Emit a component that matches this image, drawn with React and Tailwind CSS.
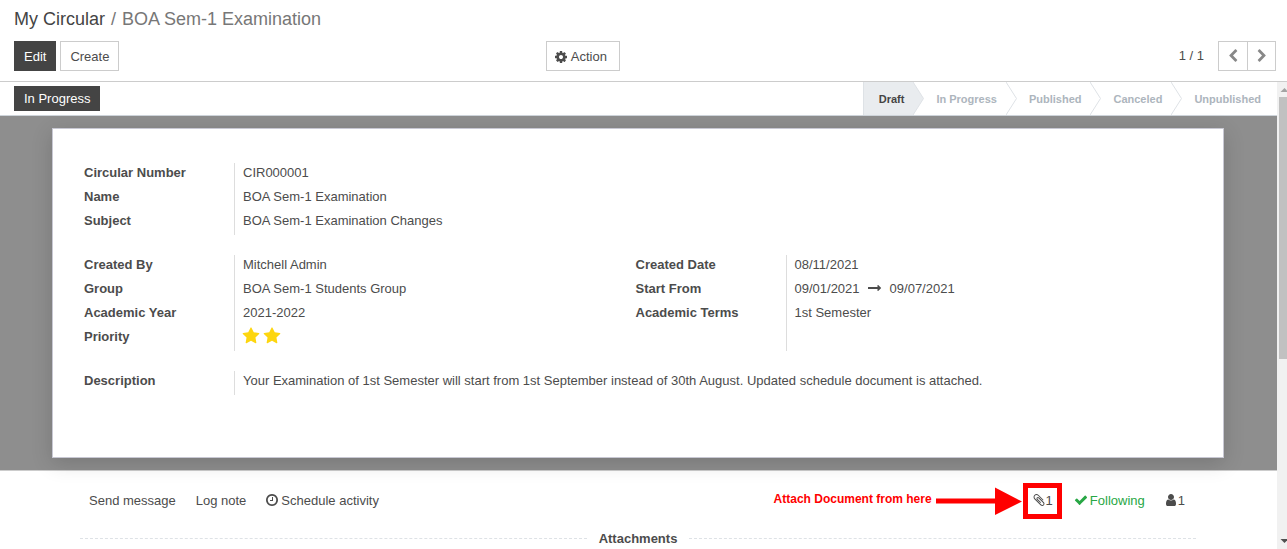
import React from "react";

const ICONS = {
  cog: "M1152 896q0-106-75-181t-181-75-181 75-75 181 75 181 181 75 181-75 75-181zm512-109v222q0 12-8 23t-20 13l-185 28q-19 54-39 91 35 50 107 138 10 12 10 25t-9 23q-27 37-99 108t-94 71q-12 0-26-9l-138-108q-44 23-91 38-16 136-29 186-7 28-36 28h-222q-14 0-24.5-8.5t-11.5-21.5l-28-184q-49-16-90-37l-141 107q-10 9-25 9-14 0-25-11-126-114-165-168-7-10-7-23 0-12 8-23 15-21 51-66.5t54-70.5q-27-50-41-99l-183-27q-13-2-21-12.5t-8-23.5v-222q0-12 8-23t19-13l186-28q14-46 39-92-40-57-107-138-10-12-10-24 0-10 9-23 26-36 98.5-107.5t94.5-71.5q13 0 26 10l138 107q44-23 91-38 16-136 29-186 7-28 36-28h222q14 0 24.5 8.5t11.5 21.5l28 184q49 16 90 37l142-107q9-9 24-9 13 0 25 10 129 119 165 170 7 8 7 22 0 12-8 23-15 21-51 66.5t-54 70.5q26 50 41 98l183 28q13 2 21 12.5t8 23.5z",
  star: "M1728 647q0 22-26 48l-363 354 86 500q1 7 1 20 0 21-10.5 35.5t-30.5 14.5q-19 0-40-12l-449-236-449 236q-22 12-40 12-21 0-31.5-14.5t-10.5-35.5q0-6 2-20l86-500-364-354q-25-27-25-48 0-37 56-46l502-73 225-455q19-41 49-41t49 41l225 455 502 73q56 9 56 46z",
  check: "M1671 566q0 40-28 68l-724 724-136 136q-28 28-68 28t-68-28l-136-136-362-362q-28-28-28-68t28-68l136-136q28-28 68-28t68 28l294 295 656-657q28-28 68-28t68 28l136 136q28 28 28 68z",
  user: "M1536 1399q0 109-62.5 187t-150.5 78h-854q-88 0-150.5-78t-62.5-187q0-85 8.5-160.5t31.5-152 58.5-131 94-89 134.5-34.5q131 128 313 128t313-128q76 0 134.5 34.5t94 89 58.5 131 31.5 152 8.5 160.5zm-256-887q0 159-112.5 271.5t-271.5 112.5-271.5-112.5-112.5-271.5 112.5-271.5 271.5-112.5 271.5 112.5 112.5 271.5z",
  clock: "M1024 544v448q0 14-9 23t-23 9h-320q-14 0-23-9t-9-23v-64q0-14 9-23t23-9h224v-352q0-14 9-23t23-9h64q14 0 23 9t9 23zm416 352q0-148-73-273t-198-198-273-73-273 73-198 198-73 273 73 273 198 198 273 73 273-73 198-198 73-273zm224 0q0 209-103 385.5t-279.5 279.5-385.5 103-385.5-103-279.5-279.5-103-385.5 103-385.5 279.5-279.5 385.5-103 385.5 103 279.5 279.5 103 385.5z",
  left: "M1427 301l-531 531 531 531q19 19 19 45t-19 45l-166 166q-19 19-45 19t-45-19l-742-742q-19-19-19-45t19-45l742-742q19-19 45-19t45 19l166 166q19 19 19 45t-19 45z",
  right: "M1363 877l-742 742q-19 19-45 19t-45-19l-166-166q-19-19-19-45t19-45l531-531-531-531q-19-19-19-45t19-45l166-166q19-19 45-19t45 19l742 742q19 19 19 45t-19 45z",
  clip: "M1596 1385q0 117-79 196t-196 79q-135 0-235-100l-777-776q-113-115-113-271 0-159 110-270t269-111q158 0 273 113l605 606q10 10 10 22 0 16-30.5 46.5t-46.5 30.5q-13 0-23-10l-606-607q-79-77-181-77-106 0-179 75t-73 181q0 105 76 181l776 777q63 63 145 63 64 0 106-42t42-106q0-82-63-145l-581-581q-26-24-60-24-29 0-48 19t-19 48q0 32 25 59l410 410q10 10 10 22 0 16-31 47t-47 31q-12 0-22-10l-410-410q-63-61-63-149 0-82 57-139t139-57q88 0 149 63l581 581q100 98 100 235z",
};

function Icon({ name, className = "mb-0.5 size-[14px]" }) {
  return (
    <svg viewBox="0 0 1792 1792" fill="currentColor" aria-hidden="true" className={`shrink-0 ${className}`}>
      <path d={ICONS[name]} />
    </svg>
  );
}

function Group({ rows }) {
  return (
    <table className="w-full table-fixed border-separate border-spacing-0">
      <tbody>
        {rows.map(([label, value], i) => (
          <tr key={i} className="h-6 align-top">
            <th scope="row" className="w-[150px] p-0 text-left font-bold">{label}</th>
            <td className="border-l border-[#ddd] p-0 pl-2">{value}</td>
          </tr>
        ))}
      </tbody>
    </table>
  );
}

const dates = (
  <span className="flex items-center gap-2">
    09/01/2021
    <svg viewBox="0 0 14 8" className="mb-0.5 h-2 w-[14px]" fill="currentColor" aria-hidden="true">
      <path d="M0.300 3H9.500V1.200Q9.700 0.800 10.200 1.100L13 3.700Q13.200 4 13 4.300L10.200 6.900Q9.700 7.200 9.500 6.800V5H0.300Q0 5 0 4.700V3.300Q0 3 0.300 3Z" />
    </svg>
    09/07/2021
  </span>
);

const stars = (
  <span className="-ml-px flex gap-[3px]">
    <Icon name="star" className="size-[18px]" />
    <Icon name="star" className="size-[18px]" />
  </span>
);

function Stage({ label, current, last }) {
  return (
    <li className={`flex items-stretch ${current ? "border-l border-[#dee2e6]" : ""}`}>
      <span
        className={`flex items-center ${
          current ? "bg-[#e9ecef] pr-[9px] pl-[15px] text-[#444]" : last ? "pr-4 pl-3" : "pr-[9px] pl-3"
        }`}
      >
        {label}
      </span>
      {!last && (
        <svg viewBox="0 0 11 33" className="h-[33px] w-[11px]" aria-hidden="true">
          <path d="M0 0L10.5 16.5L0 33" fill={current ? "#e9ecef" : "none"} stroke="#dee2e6" />
        </svg>
      )}
    </li>
  );
}

export default function App() {
  return (
    <div className="flex h-screen flex-col overflow-hidden bg-white font-['Liberation_Sans',Arial,sans-serif] text-[13px] leading-5 text-[#4c4c4c]">
      <header className="border-b border-[#ccc] pr-[11px] pb-2.5 pl-3.5">
        <nav aria-label="Breadcrumb" className="flex gap-1.5 pt-[5px] text-lg leading-7">
          <a href="#circulars" className="text-[#444]">My Circular</a>
          <span className="text-[#777]">/</span>
          <span className="text-[#777]">BOA Sem-1 Examination</span>
        </nav>
        <div className="mt-2 flex items-center">
          <div className="flex w-5/12 gap-1">
            <button className="h-[30px] bg-[#444] px-2.5 pt-0.5 text-white">Edit</button>
            <button className="h-[30px] border border-[#ccc] px-[9px] pt-0.5">Create</button>
          </div>
          <div className="flex-1 pl-1.5">
            <button className="flex h-[30px] items-center gap-[3px] border border-[#ccc] pt-0.5 pr-3 pl-[7px]">
              <Icon name="cog" className="size-[14px]" />
              Action
            </button>
          </div>
          <span className="mr-3.5">1 / 1</span>
          <div className="flex text-[#888]">
            <button aria-label="Previous" className="flex h-[30px] w-[30px] items-center justify-center border border-[#ccc]">
              <Icon name="left" className="size-[14px]" />
            </button>
            <button aria-label="Next" className="-ml-px flex h-[30px] w-[29px] items-center justify-center border border-[#ccc]">
              <Icon name="right" className="size-[14px]" />
            </button>
          </div>
        </div>
      </header>

      <div className="flex min-h-0 flex-1">
        <main className="min-w-0 flex-1 overflow-hidden">
          <div className="flex items-start justify-between border-b border-[#ced4da] pl-3.5">
            <button className="mt-1 h-[25px] bg-[#444] px-2.5 text-white">In Progress</button>
            <ol className="flex text-[11px] font-bold text-[#adb5bd]">
              <Stage label="Draft" current />
              <Stage label="In Progress" />
              <Stage label="Published" />
              <Stage label="Canceled" />
              <Stage label="Unpublished" last />
            </ol>
          </div>

          <div className="border-b border-[#ccc] bg-[#8e8e8e] py-3 pr-[53px] pl-[52px]">
            <section className="relative flex flex-col gap-5 border border-[#c8c8d3] bg-white pt-[34px] pr-9 pb-[62px] pl-[31px] shadow-[0_5px_20px_rgba(0,0,0,0.16)]">
              <Group
                rows={[
                  ["Circular Number", "CIR000001"],
                  ["Name", "BOA Sem-1 Examination"],
                  ["Subject", "BOA Sem-1 Examination Changes"],
                ]}
              />
              <div className="grid grid-cols-2">
                <Group
                  rows={[
                    ["Created By", "Mitchell Admin"],
                    ["Group", "BOA Sem-1 Students Group"],
                    ["Academic Year", "2021-2022"],
                    ["Priority", <span className="text-[#fdd60f]">{stars}</span>],
                  ]}
                />
                <Group
                  rows={[
                    ["Created Date", "08/11/2021"],
                    ["Start From", dates],
                    ["Academic Terms", "1st Semester"],
                    ["", ""],
                  ]}
                />
              </div>
              <Group
                rows={[
                  [
                    "Description",
                    "Your Examination of 1st Semester will start from 1st September instead of 30th August. Updated schedule document is attached.",
                  ],
                ]}
              />
            </section>
          </div>

          <section className="pt-3 pr-[81px] pl-20">
            <div className="flex h-9 items-center justify-between pr-[11px] pl-[9px]">
              <div className="flex items-center gap-5">
                <button>Send message</button>
                <button>Log note</button>
                <button className="-ml-px flex items-center gap-0.5">
                  <Icon name="clock" />
                  Schedule activity
                </button>
              </div>
              <div className="flex items-center gap-[19px]">
                <div className="relative">
                  <button aria-label="Attachments: 1" className="flex items-center">
                    <Icon name="clip" />1
                  </button>
                  <div className="pointer-events-none absolute -inset-x-[9px] -inset-y-2 border-[5px] border-[#f00]" />
                  <div className="pointer-events-none absolute top-1/2 right-full mr-2.5 flex -translate-y-1/2 items-center gap-1 text-xs font-bold whitespace-nowrap text-[#f00]">
                    <span className="pb-1">Attach Document from here</span>
                    <svg viewBox="0 0 86 28" className="h-7 w-[86px]" fill="currentColor" aria-hidden="true">
                      <path d="M0 11.500H59V0.500L86 14.500L59 28V16.500H0Z" />
                    </svg>
                  </div>
                </div>
                <button className="flex items-center gap-0.5 pl-0.5 text-[#28a745]">
                  <Icon name="check" />
                  Following
                </button>
                <button aria-label="Followers: 1" className="flex items-center">
                  <Icon name="user" />1
                </button>
              </div>
            </div>
            <div className="mt-2.5 flex items-center gap-3">
              <span className="mb-px flex-1 border-t border-dashed border-[#dee2e6]" />
              <h2 className="font-bold">Attachments</h2>
              <span className="mb-px flex-1 border-t border-dashed border-[#dee2e6]" />
            </div>
          </section>
        </main>

        <div aria-hidden="true" className="flex w-2.5 flex-col justify-between overflow-hidden bg-[#f1f1f1]">
          <div className="flex min-h-0 flex-1 flex-col">
            <svg viewBox="0 0 10 15" className="h-[15px] w-2.5 shrink-0">
              <path d="M3.500 10L7.500 6L11.500 10Z" fill="#a3a3a3" />
            </svg>
            <div className="ml-0.5 h-[58%] bg-[#c1c1c1]" />
          </div>
          <svg viewBox="0 0 10 15" className="h-[15px] w-2.5 shrink-0">
            <path d="M3.500 5L7.500 9L11.500 5Z" fill="#505050" />
          </svg>
        </div>
      </div>
    </div>
  );
}
